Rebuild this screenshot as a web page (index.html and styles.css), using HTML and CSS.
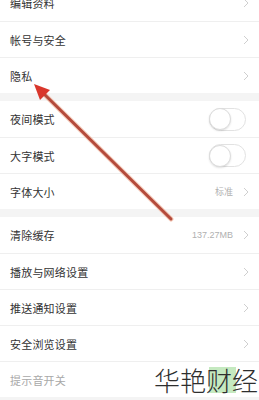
FILE: index.html
```html
<!DOCTYPE html>
<html lang="zh">
<head>
<meta charset="utf-8">
<link rel="stylesheet" href="styles.css">
</head>
<body>
<div class="page">
  <div class="section first">
    <div class="row"><span class="label">编辑资料</span><span class="right"><svg class="chev" viewBox="0 0 6 10"><polyline points="1,1 5,5 1,9"/></svg></span></div>
    <div class="row"><span class="label">帐号与安全</span><span class="right"><svg class="chev" viewBox="0 0 6 10"><polyline points="1,1 5,5 1,9"/></svg></span></div>
    <div class="row"><span class="label">隐私</span><span class="right"><svg class="chev" viewBox="0 0 6 10"><polyline points="1,1 5,5 1,9"/></svg></span></div>
  </div>
  <div class="section">
    <div class="row"><span class="label">夜间模式</span><span class="right"><span class="toggle"><span class="knob"></span></span></span></div>
    <div class="row"><span class="label">大字模式</span><span class="right"><span class="toggle"><span class="knob"></span></span></span></div>
    <div class="row"><span class="label">字体大小</span><span class="right"><span class="value">标准</span><svg class="chev" viewBox="0 0 6 10"><polyline points="1,1 5,5 1,9"/></svg></span></div>
  </div>
  <div class="section">
    <div class="row"><span class="label">清除缓存</span><span class="right"><span class="value">137.27MB</span><svg class="chev" viewBox="0 0 6 10"><polyline points="1,1 5,5 1,9"/></svg></span></div>
    <div class="row"><span class="label">播放与网络设置</span><span class="right"><svg class="chev" viewBox="0 0 6 10"><polyline points="1,1 5,5 1,9"/></svg></span></div>
    <div class="row"><span class="label">推送通知设置</span><span class="right"><svg class="chev" viewBox="0 0 6 10"><polyline points="1,1 5,5 1,9"/></svg></span></div>
    <div class="row"><span class="label">安全浏览设置</span><span class="right"><svg class="chev" viewBox="0 0 6 10"><polyline points="1,1 5,5 1,9"/></svg></span></div>
    <div class="row"><span class="label dim">提示音开关</span><span class="right"></span></div>
  </div>

  <svg class="arrow" viewBox="0 0 259 400" width="259" height="400">
    <line x1="171" y1="219" x2="42" y2="92" class="halo"/>
    <line x1="171" y1="219" x2="42" y2="92" class="shaft"/>
    <polygon points="34,84 50,90 40,100" class="head"/>
  </svg>

  <div class="mark">
    <span class="hl"></span>
    <span class="mark-text">华艳财经</span>
  </div>
</div>
</body>
</html>
```
FILE: styles.css
```css
* { box-sizing: border-box; }
html, body { margin: 0; padding: 0; }
body {
  width: 259px;
  height: 400px;
  overflow: hidden;
  background: #ffffff;
  font-family: "Noto Sans CJK SC", "Noto Sans", sans-serif;
}
.page {
  position: relative;
  width: 259px;
  height: 400px;
  overflow: hidden;
  background: #f4f4f4;
}
.section {
  background: #ffffff;
  display: flex;
  flex-direction: column;
  margin-bottom: 8px;
}
.section.first { margin-top: -15px; }
.row {
  height: 36px;
  display: flex;
  align-items: center;
  justify-content: space-between;
  padding: 0 10px 0 10px;
  position: relative;
}
.row + .row { border-top: 1px solid #efefef; }
.label {
  font-size: 11px;
  color: #333333;
  letter-spacing: 0.2px;
}
.label.dim { color: #a8a8a8; }
.right {
  display: flex;
  align-items: center;
  gap: 10px;
}
.value {
  font-family: "Liberation Sans", "Noto Sans CJK SC", sans-serif;
  font-size: 9px;
  color: #b0b0b0;
}
.chev {
  width: 6px;
  height: 10px;
  fill: none;
  stroke: #cfcfcf;
  stroke-width: 1;
}
.toggle {
  width: 37px;
  height: 23px;
  border-radius: 12px;
  border: 1px solid #e2e2e2;
  background: #ffffff;
  display: flex;
  align-items: center;
  margin-right: 3px;
}
.knob {
  width: 22px;
  height: 22px;
  border-radius: 50%;
  background: #ffffff;
  border: 1px solid #dcdcdc;
  box-shadow: 0 1px 2px rgba(0,0,0,0.12);
  margin-left: -1px;
}
.arrow {
  position: absolute;
  left: 0;
  top: 0;
}
.halo { stroke: #f2b9a2; stroke-width: 5; stroke-linecap: round; opacity: 0.7; }
.shaft { stroke: #b44b3c; stroke-width: 3; stroke-linecap: round; }
.head { fill: #d9372c; }
.mark {
  position: absolute;
  right: 1px;
  bottom: 5px;
  height: 30px;
}
.hl {
  position: absolute;
  left: 55px;
  top: 2px;
  width: 27px;
  height: 26px;
  background: rgba(150, 215, 140, 0.55);
}
.mark-text {
  position: relative;
  font-family: "Noto Sans CJK SC", sans-serif;
  font-weight: 300;
  font-size: 26px;
  line-height: 30px;
  color: #2e2e2e;
  letter-spacing: 0;
}
```
